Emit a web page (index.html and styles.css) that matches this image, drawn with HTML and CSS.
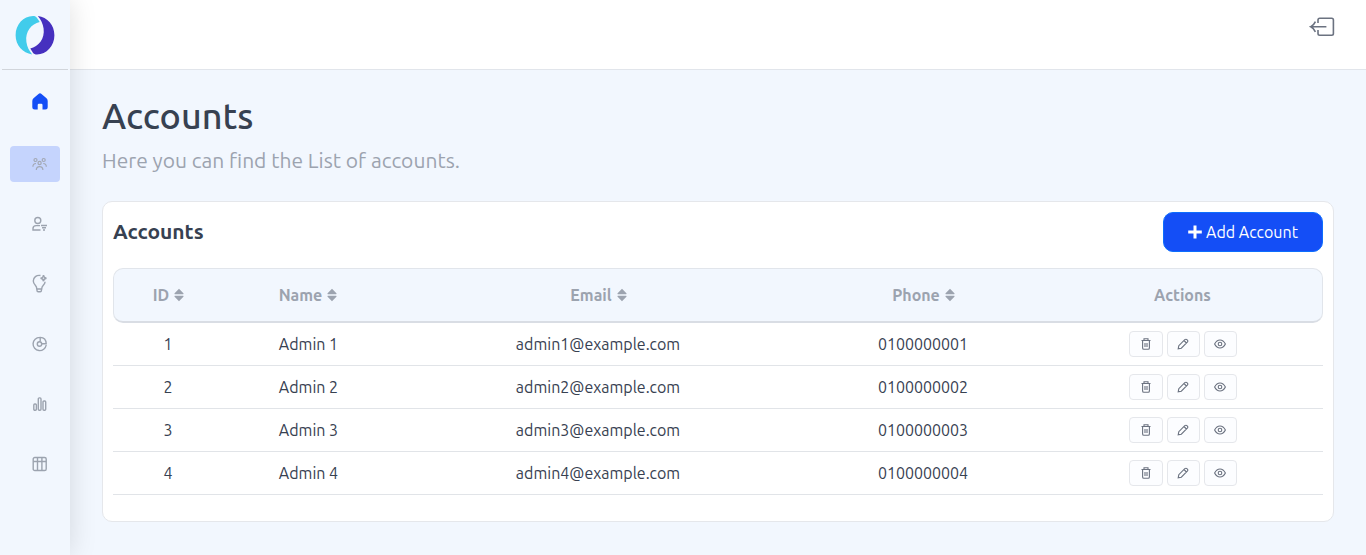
FILE: index.html
```html
<!DOCTYPE html>
<html lang="en">
<head>
<meta charset="utf-8">
<title>Accounts</title>
<link rel="stylesheet" href="styles.css">
</head>
<body>
<svg class="defs" aria-hidden="true">
  <symbol id="sort" viewBox="0 0 10 14"><path d="M5 .8 9.4 5.2Q10 6.200 9 6.200H1Q0 6.200 .6 5.200ZM5 13.200.6 8.800Q0 7.800 1 7.800H9Q10 7.800 9.400 8.800Z"/></symbol>
  <symbol id="trash" viewBox="0 0 10 12"><path d="M.5 2.500h9M3 2.300V.8h4v1.500M1.600 2.700v7.200q0 1.300 1.300 1.300h4.200q1.300 0 1.300-1.300V2.700M4 5v4M6 5v4"/></symbol>
  <symbol id="pencil" viewBox="0 0 12 12"><path d="M1.200 10.800 1.800 7.700 7.800 1.700Q9 .7 10.200 1.800T10.300 4.200L4.300 10.200ZM7 2.500l2.400 2.500"/></symbol>
  <symbol id="eye" viewBox="0 0 12 10"><path d="M.6 5Q2.700 1 6 1t5.400 4Q9.300 9 6 9T.6 5Z"/><circle cx="6" cy="5" r="1.800"/></symbol>
</svg>
<div class="app">
  <aside class="sidebar">
    <div class="brand">
      <svg width="40" height="40" viewBox="0 0 40 40"><path fill="#41cceb" d="M17.200 39.400C7.500 38.200.6 30 .6 20.300.6 9.500 8.500 1.200 18 1.100c1.800 0 3.300.6 4.200 2.100.9 1.300 1.600 2.400 2.500 3.900C16.500 9 10 16.500 11.400 27c.7 5 2.700 8.600 5.800 12.400Z"/><path fill="#4630bf" d="M22.800 1.100C32.500 2.300 39.400 10.300 39.400 20.200 39.400 31 31.500 39.300 22 39.400c-1.800 0-3.300-.6-4.200-2-.9-1.300-1.600-2.500-2.500-4C23.500 31.500 30 24 28.600 13.500 27.900 8.500 25.900 4.900 22.800 1.100Z"/></svg>
    </div>
    <nav class="nav">
      <a class="item home"><svg width="16" height="17" viewBox="0 0 16 17"><path d="M8 .3q.8 0 1.500.6l5 4.400Q15.700 6.300 15.700 8v6q0 2.500-2.500 2.500h-2.700V12q0-1.200-1.200-1.200H6.900Q5.700 10.800 5.700 12v4.500H2.800Q.3 16.500.3 14V8Q.3 6.300 1.500 5.300l5-4.400Q7.200.3 8 .3Z"/></svg></a>
      <a class="item active"><svg width="16" height="14" viewBox="0 0 16 14"><circle cx="3.500" cy="3" r="1.500"/><circle cx="11.700" cy="3" r="1.500"/><circle cx="7.600" cy="6" r="1.600"/><path d="M4.300 13Q4.400 9.700 7.600 9.700t3.300 3.300M.9 9.700Q.9 6.500 4 6.500M14.300 9.700Q14.300 6.500 11.200 6.500"/></svg></a>
      <a class="item"><svg width="16" height="16" viewBox="0 0 16 16"><circle cx="5.800" cy="4.500" r="3"/><path d="M8.500 14H1v-1.500q0-2.900 3.100-2.900H8M9 9.500h6M10 11.800h4M11 14h2"/></svg></a>
      <a class="item bulb"><svg width="16" height="19" viewBox="0 0 16 19"><path d="M8.500 1.500C4.500.8 1.300 3.400 1.300 7q0 2.300 2 4.300 1.500 1.700 1.500 3.700h4.900q0-2 1.600-3.700Q13 9.500 13.100 7.800M5 15v1.500q0 1.200 1.200 1.200h2q1.200 0 1.200-1.200V15M11.500 1q.2 3 3 3.300-2.800.3-3 3-.3-2.700-3-3Q11.200 4 11.500 1Z"/></svg></a>
      <a class="item"><svg width="16" height="16" viewBox="0 0 16 16"><path d="M7.700 1.400A6.600 6.600 0 1 0 14.200 9M8.200 5.500V1.400Q14 1.500 14.200 7.700H10"/><circle cx="7.500" cy="8" r="2.200"/></svg></a>
      <a class="item"><svg width="14" height="14" viewBox="0 0 14 14"><rect x=".8" y="7" width="2.600" height="6.200" rx="1"/><rect x="5.300" y=".9" width="2.700" height="12.300" rx="1"/><rect x="10" y="4" width="2.700" height="9.200" rx="1"/></svg></a>
      <a class="item"><svg width="16" height="16" viewBox="0 0 16 16"><rect x="1.200" y="1.500" width="13" height="13" rx="1.600"/><path d="M1.200 5.500h13M5.500 1.500v13M9.900 1.500v13"/></svg></a>
    </nav>
  </aside>
  <div class="page">
    <header class="topbar"><svg width="26" height="20" viewBox="0 0 26 20"><path d="M9 6V3q0-1.700 1.700-1.700h12Q24.400 1.300 24.400 3v13.500q0 1.700-1.700 1.700h-12q-1.700 0-1.700-1.700V13M17.400 9.700H1.800M6.400 4.600Q4.600 8.500 1.800 9.700 4.600 11 6.400 14.800"/></svg></header>
    <main class="content">
      <h1>Accounts</h1>
      <p class="lead">Here you can find the List of accounts.</p>
      <section class="card">
        <div class="card-head">
          <h2>Accounts</h2>
          <button class="add"><svg width="14" height="14" viewBox="0 0 14 14"><path d="M7 .5v13M.2 7h13.600"/></svg><span>Add Account</span></button>
        </div>
        <div class="row head">
          <div><span>ID</span><svg class="sort"><use href="#sort"/></svg></div>
          <div><span>Name</span><svg class="sort"><use href="#sort"/></svg></div>
          <div><span>Email</span><svg class="sort"><use href="#sort"/></svg></div>
          <div><span>Phone</span><svg class="sort"><use href="#sort"/></svg></div>
          <div><span>Actions</span></div>
        </div>
        <div class="row"><div>1</div><div class="name">Admin 1</div><div>admin1@example.com</div><div>0100000001</div><div class="actions"><button><svg width="10" height="12"><use href="#trash"/></svg></button><button><svg width="12" height="12"><use href="#pencil"/></svg></button><button><svg width="12" height="10"><use href="#eye"/></svg></button></div></div>
        <div class="row"><div>2</div><div class="name">Admin 2</div><div>admin2@example.com</div><div>0100000002</div><div class="actions"><button><svg width="10" height="12"><use href="#trash"/></svg></button><button><svg width="12" height="12"><use href="#pencil"/></svg></button><button><svg width="12" height="10"><use href="#eye"/></svg></button></div></div>
        <div class="row"><div>3</div><div class="name">Admin 3</div><div>admin3@example.com</div><div>0100000003</div><div class="actions"><button><svg width="10" height="12"><use href="#trash"/></svg></button><button><svg width="12" height="12"><use href="#pencil"/></svg></button><button><svg width="12" height="10"><use href="#eye"/></svg></button></div></div>
        <div class="row"><div>4</div><div class="name">Admin 4</div><div>admin4@example.com</div><div>0100000004</div><div class="actions"><button><svg width="10" height="12"><use href="#trash"/></svg></button><button><svg width="12" height="12"><use href="#pencil"/></svg></button><button><svg width="12" height="10"><use href="#eye"/></svg></button></div></div>
      </section>
    </main>
  </div>
</div>
</body>
</html>
```
FILE: styles.css
```css
* { box-sizing: border-box; }
body { margin: 0; background: #f2f7fe; color: #374151; font: 16px/24px Ubuntu, "Noto Sans", sans-serif; overflow: hidden; }
.defs { display: none; }
.app { display: flex; height: 555px; }
.sidebar { width: 70px; flex: none; background: #f2f7fe; box-shadow: 0 0 28px rgba(0, 0, 0, .13); z-index: 1; }
.brand { height: 70px; margin: 0 2px; padding: 15px 13px; border-bottom: 1px solid #d1d5db; }
.brand svg { display: block; }
.nav { display: flex; flex-direction: column; gap: 24px; padding: 13px 10px; }
.item { display: flex; align-items: center; justify-content: center; height: 36px; padding-left: 9px; border-radius: 4px; fill: none; stroke: #9ca3af; stroke-width: 1.4; }
.home { fill: #144ef6; stroke: none; margin-bottom: 3px; }
.active { background: #c5d4fd; stroke: #a3a9b5; stroke-width: 1.2; }
.bulb { padding-bottom: 1px; }
.page { flex: 1; min-width: 0; }
.topbar { height: 70px; background: #fff; border-bottom: 1px solid #e1e5eb; display: flex; justify-content: flex-end; padding: 17px 31px 0 0; }
.topbar svg { fill: none; stroke: #6b7280; stroke-width: 1.6; }
.content { padding: 25px 32px 0; }
h1 { margin: 0; font-size: 36px; line-height: 42px; font-weight: 500; }
.lead { margin: 8px 0 26px; font-size: 21px; line-height: 30px; color: #9ca3af; }
.card { height: 321px; background: #fff; border: 1px solid #e5e7eb; border-radius: 10px; padding: 10px; }
.card-head { display: flex; justify-content: space-between; align-items: center; height: 40px; margin-bottom: 16px; }
h2 { margin: -2px 0 0; font-size: 21px; font-weight: 700; }
.add { display: flex; align-items: center; justify-content: center; gap: 4px; width: 160px; height: 40px; border: 1px solid #0d6efd; border-radius: 10px; background: #144ef6; color: #fff; font: 16px/24px Ubuntu, "Noto Sans", sans-serif; padding: 0; }
.add svg { stroke: #fff; stroke-width: 3; }
.row { display: grid; grid-template-columns: 110px 169px 412px 238px 1fr; align-items: center; height: 43px; border-bottom: 1px solid #e1e4e8; text-align: center; font-size: 16px; }
.name { padding-left: 2px; }
.head { height: 55px; background: #f2f7fe; border: 1px solid #e1e5eb; border-bottom: 2px solid #d9dde4; border-radius: 10px; color: #9ca3af; font-weight: 700; }
.head > div { display: flex; align-items: center; justify-content: center; gap: 5px; }
.head > div:not(:last-child) { padding-right: 1px; }
.sort { width: 10px; height: 14px; fill: #9ca3af; }
.actions { display: flex; justify-content: center; gap: 4px; padding-left: 1px; }
.actions button { display: flex; align-items: center; justify-content: center; width: 33px; height: 26px; padding: 0 1px 0 0; border: 1px solid #e5e7eb; border-radius: 4px; background: #fcfdff; fill: none; stroke: #6b7280; stroke-width: 1.1; }
.actions button:first-child { width: 34px; padding-right: 1px; }
```
